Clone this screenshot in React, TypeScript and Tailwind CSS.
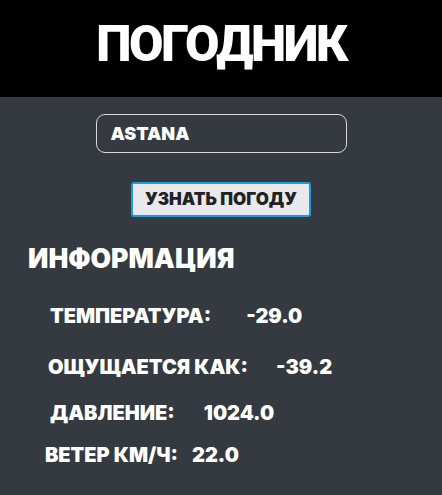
import React from "react";

const font = { fontFamily: "Inter, 'Noto Sans', sans-serif" };
const titleFont = { fontFamily: "Roboto, 'Noto Sans', sans-serif" };

export default function App() {
  return (
    <div className="w-[442px] h-[495px] bg-[#343a40] text-white flex flex-col" style={font}>
      <div className="h-[97px] bg-black flex items-center justify-center pb-[10px]">
        <h1 className="text-[50px] font-black leading-none tracking-[-2.4px] text-white" style={titleFont}>ПОГОДНИК</h1>
      </div>
      <div className="flex flex-col items-center">
        <div className="mt-[17px] w-[251px] h-[39px] rounded-[9px] border border-[#d8d8d8] flex items-center pl-[14px]">
          <span className="text-[18px] font-black leading-none">ASTANA</span>
        </div>
        <button className="mt-[29px] w-[180px] h-[35px] bg-[#e9e9ed] border-2 border-[#1a9be0] rounded-[3px] text-[#222] text-[17px] font-black leading-none">
          УЗНАТЬ ПОГОДУ
        </button>
      </div>
      <div className="pl-[28px] mt-[28px]">
        <h2 className="text-[26.5px] font-black leading-none">ИНФОРМАЦИЯ</h2>
      </div>
      <div className="flex flex-col mt-[34px] text-[20px] font-black leading-none">
        <div className="flex pl-[50px]">
          <span>ТЕМПЕРАТУРА:</span>
          <span className="ml-[35px]">-29.0</span>
        </div>
        <div className="flex pl-[48px] mt-[31px]">
          <span>ОЩУЩАЕТСЯ КАК:</span>
          <span className="ml-[28px]">-39.2</span>
        </div>
        <div className="flex pl-[50px] mt-[26px]">
          <span>ДАВЛЕНИЕ:</span>
          <span className="ml-[29px]">1024.0</span>
        </div>
        <div className="flex pl-[45px] mt-[22px]">
          <span>ВЕТЕР КМ/Ч:</span>
          <span className="ml-[14px]">22.0</span>
        </div>
      </div>
    </div>
  );
}
